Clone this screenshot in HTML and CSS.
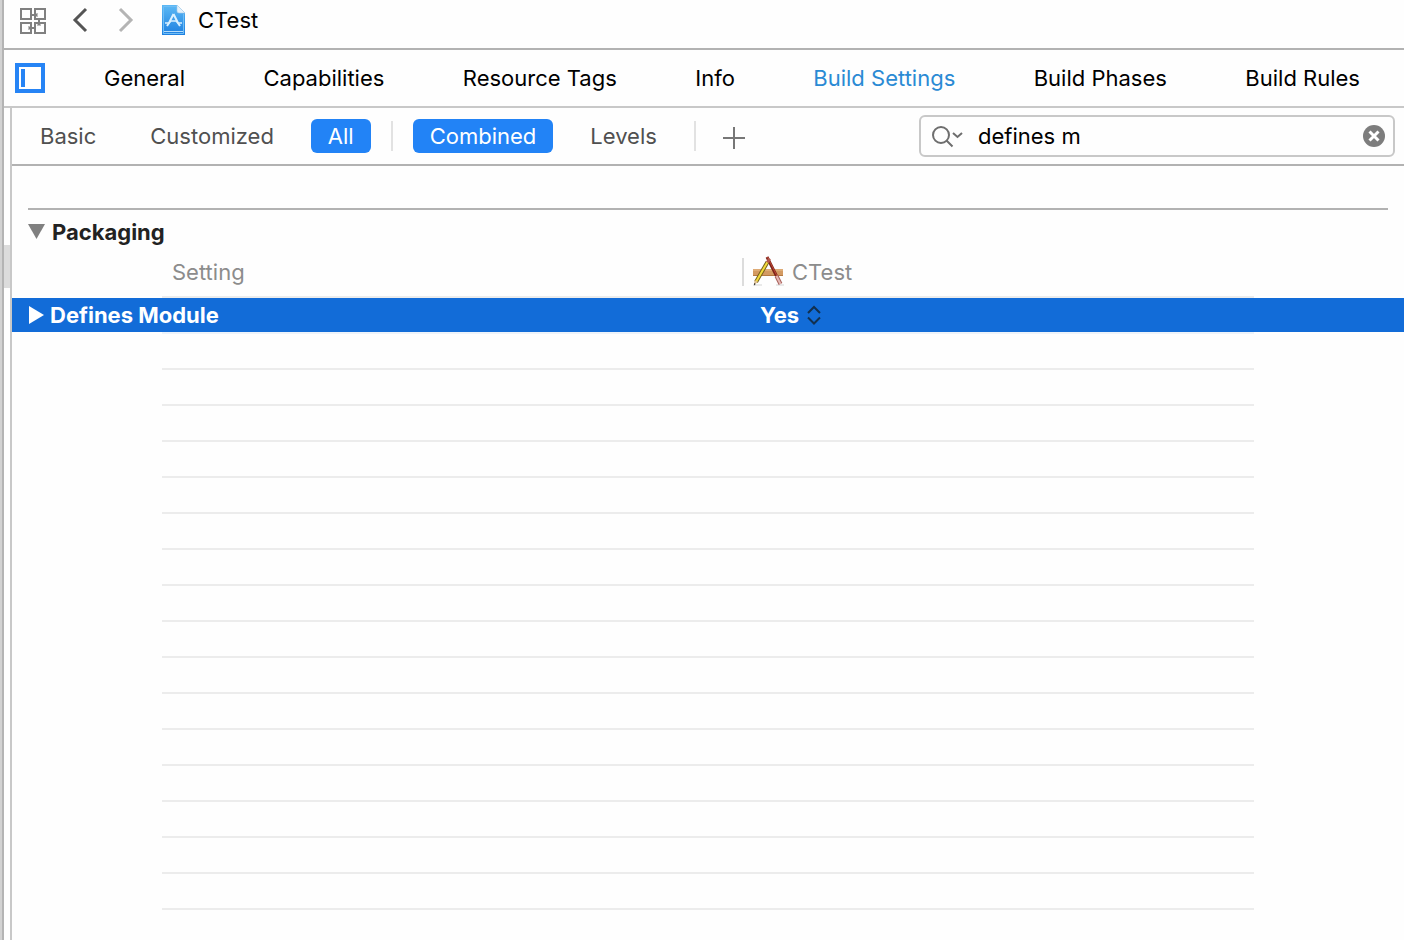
FILE: index.html
```html
<!DOCTYPE html>
<html lang="en">
<head>
  <meta charset="UTF-8">
  <meta name="viewport" content="width=device-width, initial-scale=1.0">
  <title>CTest - Build Settings</title>
  <link rel="stylesheet" href="styles.css">
</head>
<body>
<div class="window">
  <div class="navigator-edge"></div>
  <div class="editor">
    <!-- Jump bar -->
    <header class="jump-bar">
      <button class="icon-button related" aria-label="Related items">
        <svg width="28" height="30" viewBox="0 0 28 30" fill="none" stroke="#808080" stroke-width="2">
          <path d="M2 4h10v10H2zM16 4h10v10H16zM2 18h10v10H2zM16 18h10v10H16z"/>
          <path d="M12 10h6M20 14v6M10 23h6"/>
          <path d="M18 8v4M18 20h4M10 21v4" stroke-width="1"/>
        </svg>
      </button>
      <button class="icon-button back" aria-label="Back">
        <svg width="16" height="26" viewBox="0 0 16 26" fill="none" stroke="#555" stroke-width="3">
          <path d="M14 2L3 13l11 11"/>
        </svg>
      </button>
      <button class="icon-button forward" aria-label="Forward">
        <svg width="16" height="26" viewBox="0 0 16 26" fill="none" stroke="#b4b4b4" stroke-width="3">
          <path d="M2 2l11 11L2 24"/>
        </svg>
      </button>
      <button class="project">
        <svg width="24" height="30" viewBox="0 0 24 30">
          <defs>
            <linearGradient id="doc" x1="0" y1="0" x2="0" y2="1">
              <stop offset="0" stop-color="#5cb9f5"/>
              <stop offset="1" stop-color="#1d7fe0"/>
            </linearGradient>
          </defs>
          <path d="M0 0h15l8 8v22H0z" fill="url(#doc)"/>
          <path d="M1.500 1.500h13M1.500 1.500v27h20V9" fill="none" stroke="#6fbdf5"/>
          <path d="M15 0l8 8h-6q-2 0-2-2z" fill="#e4f1fb" stroke="#a9cbe6" stroke-width=".6"/>
          <path d="M2 26.500h19" stroke="#b5ddfb"/>
          <path d="M11.500 9L7 18l-2 3M11.500 9L16 18l2 3" fill="none" stroke="#d9f0ff" stroke-width="2"/>
          <path d="M3 18h4l2-2h5l2 2h4" fill="none" stroke="#d9f0ff" stroke-width="1.500"/>
        </svg>
        CTest
      </button>
    </header>

    <!-- Project editor tabs -->
    <div class="tab-bar">
      <button class="icon-button" aria-label="Show project and targets list">
        <svg width="30" height="30" viewBox="0 0 30 30">
          <path d="M2 2h26v26H2z" fill="#fff" stroke="#2684f5" stroke-width="4"/>
          <path d="M6 6h4v18H6z" fill="#2684f5"/>
        </svg>
      </button>
      <nav class="tabs">
        <button class="tab">General</button>
        <button class="tab">Capabilities</button>
        <button class="tab">Resource Tags</button>
        <button class="tab">Info</button>
        <button class="tab active">Build Settings</button>
        <button class="tab">Build Phases</button>
        <button class="tab">Build Rules</button>
      </nav>
    </div>

    <div class="body">
      <div class="splitter"><div class="splitter-mark"></div></div>
      <main class="settings">
        <!-- Filter bar -->
        <div class="filter-bar">
          <button class="filter">Basic</button>
          <button class="filter">Customized</button>
          <button class="filter selected">All</button>
          <span class="separator"></span>
          <button class="filter selected">Combined</button>
          <button class="filter">Levels</button>
          <span class="separator"></span>
          <button class="icon-button add" aria-label="Add build setting">
            <svg width="22" height="22" viewBox="0 0 22 22" stroke="#777" stroke-width="2">
              <path d="M11 0v22M0 11h22"/>
            </svg>
          </button>
          <div class="search">
            <svg width="32" height="24" viewBox="0 0 32 24" fill="none" stroke="#6e6e6e" stroke-width="2">
              <circle cx="10" cy="11" r="8"/>
              <path d="M15.500 16.500l6 6M22 9l4.500 4L31 9"/>
            </svg>
            <input type="text" value="defines m" aria-label="Search build settings">
            <button class="icon-button" aria-label="Clear search">
              <svg width="22" height="22" viewBox="0 0 22 22">
                <circle cx="11" cy="11" r="11" fill="#7d7d7d"/>
                <path d="M6.500 6.500l9 9M15.500 6.500l-9 9" stroke="#fff" stroke-width="3"/>
              </svg>
            </button>
          </div>
        </div>

        <!-- Packaging group -->
        <section class="group">
          <h2 class="group-title">
            <svg width="18" height="16" viewBox="0 0 18 16"><path d="M0 0h17L8.500 15z" fill="#808080"/></svg>
            Packaging
          </h2>
          <table class="setting-table">
            <colgroup>
              <col class="col-margin">
              <col class="col-name">
              <col>
              <col class="col-margin">
            </colgroup>
            <thead>
              <tr>
                <td></td>
                <th class="line name">Setting</th>
                <th class="line">
                  <div class="target">
                    <svg width="32" height="32" viewBox="0 0 32 32">
                      <path d="M1 29h9M24 29h8" stroke="#d4d4d4"/>
                      <path d="M1 13h30v7H1z" fill="#d39a62"/>
                      <path d="M1 14h30" stroke="#e9bd8b"/>
                      <path d="M1 19.500h30" stroke="#b57a42"/>
                      <path d="M15 1l9.500 19" stroke="#7c2118" stroke-width="3"/>
                      <path d="M15.500 1l9.500 19" stroke="#c04a36"/>
                      <path d="M24.500 20l4 8" stroke="#a8625c" stroke-width="4"/>
                      <path d="M24.500 20l4 8" stroke="#e5b9b5" stroke-width="2"/>
                      <path d="M15.500 6L4 26" stroke="#75611c" stroke-width="4"/>
                      <path d="M15.500 6L4 26" stroke="#f3dc3c" stroke-width="2"/>
                      <path d="M17.500 2.500l-2 4" stroke="#b3594d" stroke-width="3"/>
                      <path d="M2.500 24l3.500 2-4 3z" fill="#dfc193"/>
                      <path d="M2.200 27l1.500 1L2 29.500z" fill="#222"/>
                    </svg>
                    CTest
                  </div>
                </th>
                <td></td>
              </tr>
            </thead>
            <tbody>
              <tr class="current">
                <th scope="row">
                  <div class="setting">
                    <svg width="16" height="18" viewBox="0 0 16 18"><path d="M1 0l15 9-15 9z" fill="#fff"/></svg>
                    Defines Module
                  </div>
                </th>
                <td class="line"></td>
                <td class="line">
                  <div class="value">
                    <select aria-label="Defines Module">
                      <option selected>Yes</option>
                      <option>No</option>
                    </select>
                    <svg width="14" height="20" viewBox="0 0 14 20" fill="none" stroke="#12304f" stroke-width="2">
                      <path d="M1 8l6-6 6 6M1 12.500l6 6 6-6"/>
                    </svg>
                  </div>
                </td>
                <td></td>
              </tr>
              <tr><td></td><td class="line"></td><td class="line"></td><td></td></tr>
              <tr><td></td><td class="line"></td><td class="line"></td><td></td></tr>
              <tr><td></td><td class="line"></td><td class="line"></td><td></td></tr>
              <tr><td></td><td class="line"></td><td class="line"></td><td></td></tr>
              <tr><td></td><td class="line"></td><td class="line"></td><td></td></tr>
              <tr><td></td><td class="line"></td><td class="line"></td><td></td></tr>
              <tr><td></td><td class="line"></td><td class="line"></td><td></td></tr>
              <tr><td></td><td class="line"></td><td class="line"></td><td></td></tr>
              <tr><td></td><td class="line"></td><td class="line"></td><td></td></tr>
              <tr><td></td><td class="line"></td><td class="line"></td><td></td></tr>
              <tr><td></td><td class="line"></td><td class="line"></td><td></td></tr>
              <tr><td></td><td class="line"></td><td class="line"></td><td></td></tr>
              <tr><td></td><td class="line"></td><td class="line"></td><td></td></tr>
              <tr><td></td><td class="line"></td><td class="line"></td><td></td></tr>
              <tr><td></td><td class="line"></td><td class="line"></td><td></td></tr>
              <tr><td></td><td class="line"></td><td class="line"></td><td></td></tr>
            </tbody>
          </table>
        </section>
      </main>
    </div>
  </div>
</div>
</body>
</html>
```

FILE: styles.css
```css
/* General Styles */
* {
  box-sizing: border-box;
}
body {
  margin: 0;
  background: #fefefe;
  color: #000;
  font-family: Inter, "Liberation Sans", sans-serif;
  font-size: 22px;
  line-height: 28px;
}
button, input, select {
  font: inherit;
  color: inherit;
  background: none;
  border: none;
  margin: 0;
  padding: 0;
}
svg {
  display: block;
  flex: none;
}
.icon-button {
  flex: none;
}
.window {
  display: flex;
  min-height: 100vh;
}
.navigator-edge {
  flex: none;
  width: 4px;
  background: #d2d2d2;
  border-right: 2px solid #b4b4b4;
}
.editor {
  flex: 1;
  min-width: 0;
  display: flex;
  flex-direction: column;
}
/* Jump bar */
.jump-bar {
  display: flex;
  align-items: center;
  height: 50px;
  padding: 0 15px 8px;
  border-bottom: 2px solid #b2b2b2;
}
.back {
  margin-left: 25px;
}
.forward {
  margin-left: 30px;
}
.project {
  display: flex;
  align-items: center;
  gap: 12px;
  margin-left: 28px;
}
/* Tabs */
.tab-bar {
  display: flex;
  align-items: center;
  height: 58px;
  padding: 0 44px 0 11px;
  border-bottom: 2px solid #c8c8c8;
}
.tabs {
  flex: 1;
  display: flex;
  justify-content: space-between;
  margin-left: 59px;
}
.tab {
  white-space: nowrap;
}
.tab.active {
  color: #2a8ad4;
}
.body {
  flex: 1;
  display: flex;
}
.splitter {
  flex: none;
  width: 8px;
  padding-top: 137px;
  border-right: 2px solid #c8c8c8;
}
.splitter-mark {
  height: 43px;
  background: #dcdcdc;
}
.settings {
  flex: 1;
  min-width: 0;
}
/* Filter bar */
.filter-bar {
  display: flex;
  align-items: center;
  gap: 20px;
  height: 58px;
  padding: 0 9px 0 11px;
  border-bottom: 2px solid #b2b2b2;
}
.filter {
  height: 34px;
  padding: 0 17px;
  border-radius: 6px;
  color: #505050;
}
.filter.selected {
  background: #2283f6;
  color: #fff;
}
.separator {
  width: 2px;
  height: 30px;
  background: #e2e2e2;
}
.add {
  margin: 4px 0 0 7px;
}
.search {
  flex: 0 1 476px;
  display: flex;
  align-items: center;
  height: 42px;
  margin-left: auto;
  padding: 0 8px 0 10px;
  border: 2px solid #c8c8c8;
  border-radius: 6px;
}
.search input {
  flex: 1;
  min-width: 0;
  padding-left: 15px;
  outline: none;
}
/* Settings */
.group {
  padding-top: 42px;
}
.group-title {
  display: flex;
  align-items: center;
  gap: 6px;
  height: 46px;
  margin: 0 16px;
  border-top: 2px solid #b2b2b2;
  color: #222;
  font-size: 22px;
}
.setting-table {
  width: 100%;
  table-layout: fixed;
  border-collapse: separate;
  border-spacing: 0;
}
.col-margin {
  width: 150px;
}
.col-name {
  width: 580px;
}
.setting-table th,
.setting-table td {
  height: 36px;
  padding: 0;
  border-bottom: 2px solid transparent;
  background-clip: padding-box;
  text-align: left;
  white-space: nowrap;
}
.setting-table .line {
  border-bottom-color: #ececec;
}
.setting-table thead th {
  height: 44px;
  padding-bottom: 6px;
  color: #8c8c8c;
  font-weight: 400;
}
.setting-table thead .name {
  padding-left: 10px;
}
.target {
  display: flex;
  align-items: center;
  gap: 8px;
  height: 28px;
  padding-left: 8px;
  border-left: 2px solid #dcdcdc;
}
.current th,
.current td {
  background-color: #126cd8;
  color: #fff;
  font-weight: 700;
}
.setting-table .current .line {
  border-bottom-color: #edf3fa;
}
.setting {
  display: flex;
  align-items: center;
  gap: 6px;
  padding-left: 16px;
}
.value {
  display: flex;
  align-items: center;
  gap: 7px;
  padding-left: 18px;
}
.value select {
  appearance: none;
}
```
